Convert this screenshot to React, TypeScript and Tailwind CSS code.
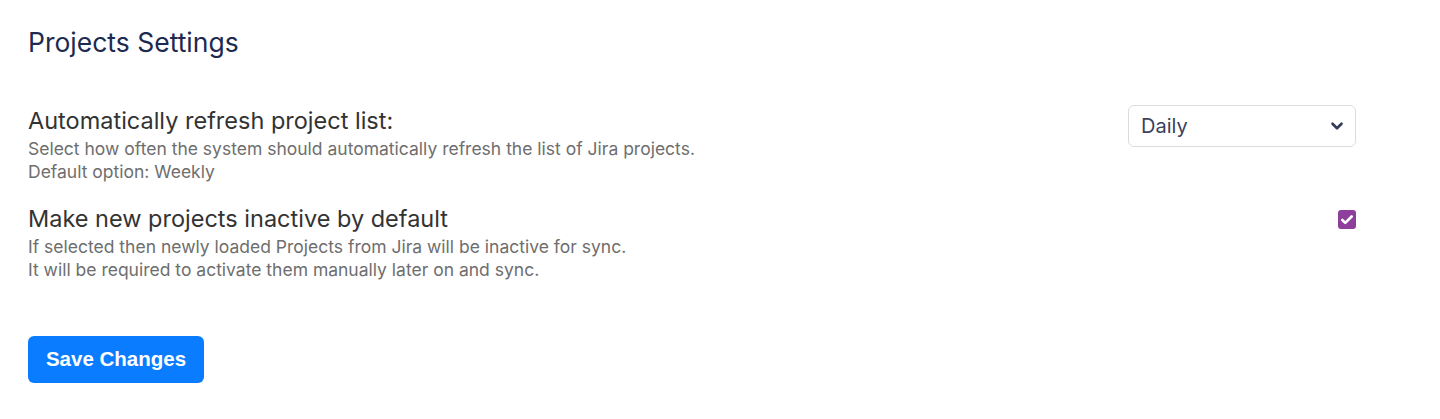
import { ChevronDown, Check } from 'lucide-react'

export default function App() {
  return (
    <div className="bg-white min-h-screen px-7 pt-[23px] pb-9 font-['Inter',sans-serif]">
      <h1 className="text-[26.5px] leading-[38px] text-[#1c2a50]">Projects Settings</h1>

      <div className="mt-[43px] flex flex-col gap-[19px]">
        <div className="flex items-start justify-between pr-[56px]">
          <div>
            <p className="text-[23.5px] leading-[33px] text-[#333]">Automatically refresh project list:</p>
            <p className="text-[17.5px] leading-[23px] text-[#6e6e6e]">
              Select how often the system should automatically refresh the list of Jira projects.
              <br />
              Default option: Weekly
            </p>
          </div>
          <div className="mt-px w-[228px] h-[42px] border border-[#dcdcdc] rounded-md flex items-center justify-between pl-3 pr-[9px] text-[20px] text-[#3b4160]">
            <span>Daily</span>
            <ChevronDown size={18} strokeWidth={3.5} className="text-[#343a58]" />
          </div>
        </div>

        <div className="flex items-start justify-between pr-[56px]">
          <div>
            <p className="text-[23.5px] leading-[33px] text-[#333]">Make new projects inactive by default</p>
            <p className="text-[17.5px] leading-[23px] text-[#6e6e6e]">
              If selected then newly loaded Projects from Jira will be inactive for sync.
              <br />
              It will be required to activate them manually later on and sync.
            </p>
          </div>
          <div className="mt-[8px] w-[18px] h-[19px] rounded-[3px] bg-[#8e3f9b] flex items-center justify-center">
            <Check size={14} strokeWidth={4.5} className="text-white" />
          </div>
        </div>
      </div>

      <button className="mt-[55px] w-[176px] h-[47px] rounded-md bg-[#0a7cff] text-white text-[20.5px] font-bold font-['Liberation_Sans',sans-serif]">
        Save Changes
      </button>
    </div>
  )
}
